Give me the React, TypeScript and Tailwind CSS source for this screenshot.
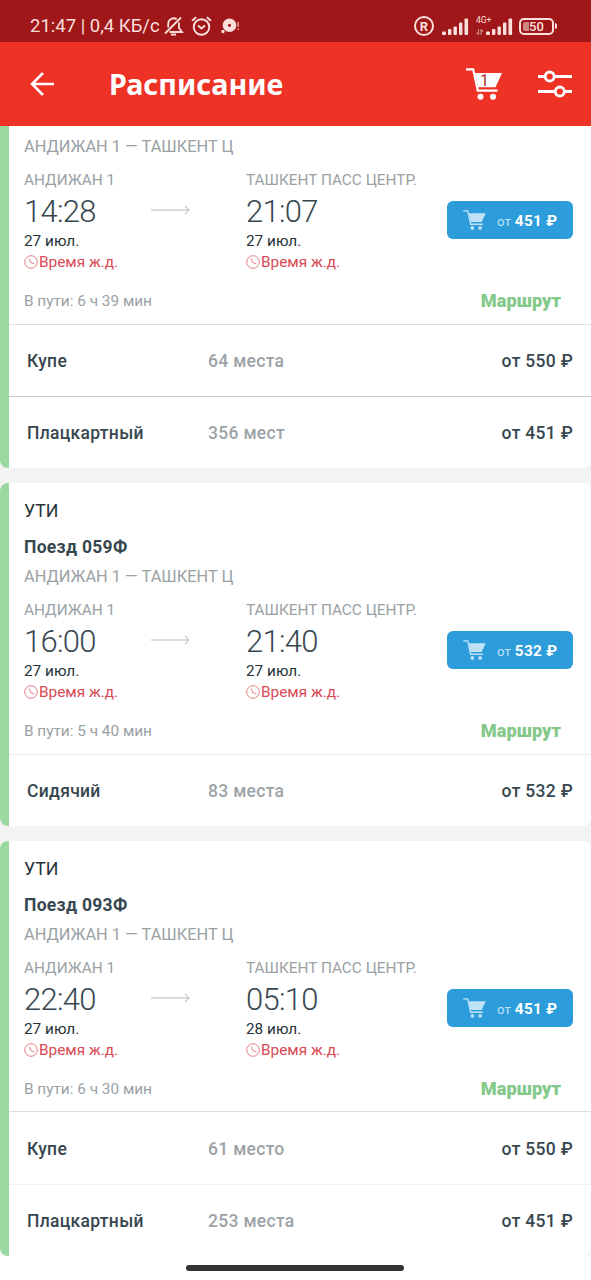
import type { ReactNode } from "react";

type Seat = { kind: string; places: string; price: string; line: string };
type Trip = {
  train?: string;
  depart: string;
  arrive: string;
  arriveDate: string;
  duration: string;
  price: string;
  seats: Seat[];
};

const trips: Trip[] = [
  {
    depart: "14:28",
    arrive: "21:07",
    arriveDate: "27 июл.",
    duration: "6 ч 39 мин",
    price: "451",
    seats: [
      { kind: "Купе", places: "64 места", price: "550", line: "border-[#dedede]" },
      { kind: "Плацкартный", places: "356 мест", price: "451", line: "border-[#c6c6c6]" },
    ],
  },
  {
    train: "Поезд 059Ф",
    depart: "16:00",
    arrive: "21:40",
    arriveDate: "27 июл.",
    duration: "5 ч 40 мин",
    price: "532",
    seats: [{ kind: "Сидячий", places: "83 места", price: "532", line: "border-[#ececec]" }],
  },
  {
    train: "Поезд 093Ф",
    depart: "22:40",
    arrive: "05:10",
    arriveDate: "28 июл.",
    duration: "6 ч 30 мин",
    price: "451",
    seats: [
      { kind: "Купе", places: "61 место", price: "550", line: "-mt-px h-[73px] border-[#dadcdc]" },
      { kind: "Плацкартный", places: "253 места", price: "451", line: "border-[#f0f0f0]" },
    ],
  },
];

function Signal() {
  return (
    <svg className="h-[17px] w-[27px]" viewBox="0 0 27 17" fill="currentColor">
      <rect x="0" y="13.5" width="4" height="3.5" rx="1" />
      <rect x="6" y="11" width="3.4" height="6" rx="1" />
      <rect x="11.5" y="8.5" width="3.4" height="8.5" rx="1" />
      <rect x="17" y="4.5" width="3.4" height="12.5" rx="1" />
      <rect x="22.5" y="0.5" width="3.6" height="16.5" rx="1" />
    </svg>
  );
}

function StatusBar() {
  return (
    <div className="flex h-[42px] items-center bg-[#9f1719] pt-[10px] pl-[30px] text-[#fbdfdc]">
      <span className="w-[134px] text-[18.5px] leading-5 whitespace-nowrap">21:47 | 0,4 КБ/с</span>
      <svg className="h-5 w-5" viewBox="0 0 20 20" fill="none" stroke="currentColor" strokeWidth="1.8">
        <path d="M1 17.5 17 1.5M4.2 11.5V8a5.5 5.5 0 0 1 8.5-4.8M15 6.4V12l3 4H5.5" />
        <path d="M7 18.6h5" strokeWidth="2" />
      </svg>
      <svg className="ml-[7px] h-5 w-[21px]" viewBox="0 0 21 20" fill="none" stroke="currentColor" strokeWidth="1.9">
        <circle cx="10.5" cy="11" r="7.8" />
        <path d="m7 9.5 3.5 3 3.5-3M1 4.8 5.2 1.3M20 4.8l-4.2-3.5" />
      </svg>
      <svg className="ml-[9px] h-5 w-[18px]" viewBox="0 0 18 20" fill="currentColor">
        <path
          fillRule="evenodd"
          d="M8.5 2.5a6.8 6.8 0 1 1 0 13.6 6.8 6.8 0 0 1 0-13.6Zm0 5.2a1.6 1.6 0 1 0 0 3.2 1.6 1.6 0 0 0 0-3.2Z"
        />
        <circle cx="2" cy="15.5" r="1.7" />
        <path d="M16.6 6h1v5h-1zM16.6 12.5h1v1.5h-1z" />
      </svg>
      <div className="ml-auto flex items-center pr-[34px]">
        <span className="mr-[8px] flex size-5 items-center justify-center rounded-full border-2 border-current text-[13px] leading-none font-bold">
          R
        </span>
        <Signal />
        <div className="relative ml-[17px]">
          <Signal />
          <span className="absolute -top-[2px] -left-[10px] text-[8.5px] leading-[9px]">4G+</span>
          <svg className="absolute top-[11px] -left-[10px] h-[6px] w-[8px]" viewBox="0 0 8 6" fill="none" stroke="#d08080" strokeWidth="1.2">
            <path d="M2.5 0v5.5L.5 3.5M5 6V.5l2 2" />
          </svg>
        </div>
        <div className="ml-[6px] flex h-[17px] w-[35px] items-center rounded-[5px] border-2 border-current p-[2px]">
          <span className="h-[9px] w-[6px] rounded-l-[2px] bg-[#cf8583]" />
          <span className="text-[13px] leading-none font-medium">50</span>
        </div>
        <span className="ml-px h-[6px] w-[2px] rounded-r bg-current" />
      </div>
    </div>
  );
}

function Cart({ className, children }: { className: string; children?: ReactNode }) {
  return (
    <svg className={className} viewBox="0 0 36 32" fill="currentColor">
      <path d="M9 5h27l-6.5 14.3H12z" />
      <path d="M0 1.3h7.2l4.6 21.4h19.7" fill="none" stroke="currentColor" strokeWidth="2.2" />
      <circle cx="14.5" cy="28.7" r="3" />
      <circle cx="27" cy="28.7" r="3" />
      {children}
    </svg>
  );
}

function AppBar() {
  return (
    <header className="flex h-[84px] items-center bg-[#ee3226] text-white">
      <svg className="ml-[30px] h-6 w-6" viewBox="0 0 24 24" fill="none" stroke="currentColor" strokeWidth="2.5">
        <path d="M24 12H2M13 1 2 12l11 11" />
      </svg>
      <h1 className="ml-[55px] font-['Noto_Sans','Roboto',sans-serif] text-[28.7px] leading-9 font-bold">Расписание</h1>
      <div className="relative ml-auto">
        <Cart className="h-8 w-9" />
        <span className="absolute top-[5px] left-[14px] text-[16px] leading-4 text-[#a8302a]">1</span>
      </div>
      <svg className="mr-[19px] ml-[36px] h-7 w-[34px]" viewBox="0 0 34 28" fill="none" stroke="currentColor" strokeWidth="2.8">
        <path d="M0 6.5h7.5M16 6.5h18M0 21.5h17.5M26 21.5h8" />
        <circle cx="11.7" cy="6.5" r="4.5" />
        <circle cx="21.8" cy="21.5" r="4.5" />
      </svg>
    </header>
  );
}

function Stop({ station, time, date }: { station: string; time: string; date: string }) {
  return (
    <div className="whitespace-nowrap">
      <div className="text-[15.35px] leading-5 text-[#9aa1a4]">{station}</div>
      <div className="pt-px text-[31px] leading-[41px] font-light tracking-[-0.7px] text-[#37474f]">{time}</div>
      <div className="text-[15.35px] leading-[18px] text-[#263238]">{date}</div>
      <div className="mt-px flex items-center text-[15.35px] leading-[22px] text-[#d94a55]">
        <svg className="mr-px h-[14px] w-[14px]" viewBox="0 0 14 14" fill="none" stroke="currentColor" strokeWidth="0.7">
          <circle cx="7" cy="7" r="6.3" />
          <path d="M5.5 3.5 6.5 7.5l4 1.5" />
        </svg>
        Время ж.д.
      </div>
    </div>
  );
}

function SeatRow({ seat }: { seat: Seat }) {
  return (
    <div
      className={`flex min-h-[72px] items-center border-t px-[18px] pt-[2px] text-[17.5px] font-medium tracking-[0.3px] text-[#37474f] ${seat.line}`}
    >
      <span className="w-[181px]">{seat.kind}</span>
      <span className="text-[#9ca3a7]">{seat.places}</span>
      <span className="ml-auto">от {seat.price} ₽</span>
    </div>
  );
}

function TripCard({ trip }: { trip: Trip }) {
  return (
    <article className={`flex overflow-hidden bg-white ${trip.train ? "rounded-lg" : "rounded-b-lg"}`}>
      <div className="w-[9px] bg-[#9ad8a0]" />
      <div className="flex-1">
        <div className={`pl-[15px] ${trip.train ? "h-[271px] pt-[10px]" : "h-[198px] pt-[9px]"}`}>
          {trip.train && (
            <>
              <div className="text-[17.7px] leading-9 text-[#263238]">УТИ</div>
              <h2 className="text-[17.5px] leading-9 font-bold tracking-[0.3px] text-[#37474f]">{trip.train}</h2>
            </>
          )}
          <div className="pt-px text-[16.35px] leading-[22px] text-[#9aa1a4]">АНДИЖАН 1 — ТАШКЕНТ Ц</div>
          <div className="mt-[12px] flex">
            <div className="w-[127px]">
              <Stop station="АНДИЖАН 1" time={trip.depart} date="27 июл." />
            </div>
            <svg className="mt-[35px] h-[10px] w-10 text-[#cfcfcf]" viewBox="0 0 40 10" fill="none" stroke="currentColor" strokeWidth="1.4">
              <path d="M0 5h38M34 1l4 4-4 4" />
            </svg>
            <div className="ml-[55px]">
              <Stop station="ТАШКЕНТ ПАСС ЦЕНТР." time={trip.arrive} date={trip.arriveDate} />
            </div>
            <button className="mt-[31px] mr-[18px] ml-auto flex h-[38px] w-[126px] items-center rounded-md bg-[#2d9cdb] pl-[16px] whitespace-nowrap text-white">
              <Cart className="h-5 w-[23px] text-[#bfe2f7]" />
              <span className="flex items-baseline pt-[3px]">
                <span className="ml-[11px] text-[13.3px] text-[#bfe2f7]">от</span>
                <span className="ml-1 text-[15.3px] font-bold tracking-[0.3px]">{trip.price} ₽</span>
              </span>
            </button>
          </div>
          <div className="mt-[18px] flex justify-between pr-[30px] leading-5">
            <span className="text-[15.35px] text-[#9aa1a4]">В пути: {trip.duration}</span>
            <a className="text-[18.2px] font-black text-[#84c98a]">Маршрут</a>
          </div>
        </div>
        {trip.seats.map((seat) => (
          <SeatRow key={seat.kind} seat={seat} />
        ))}
      </div>
    </article>
  );
}

export default function App() {
  return (
    <div className="flex h-[1280px] w-[591px] flex-col overflow-hidden bg-white font-['Roboto',sans-serif]">
      <StatusBar />
      <AppBar />
      <main className="flex flex-col gap-[15px] bg-[#f3f3f3]">
        {trips.map((trip) => (
          <TripCard key={trip.depart} trip={trip} />
        ))}
      </main>
      <div className="mt-[9px] ml-[186px] h-[6px] w-[218px] rounded-full bg-[#333333]" />
    </div>
  );
}
